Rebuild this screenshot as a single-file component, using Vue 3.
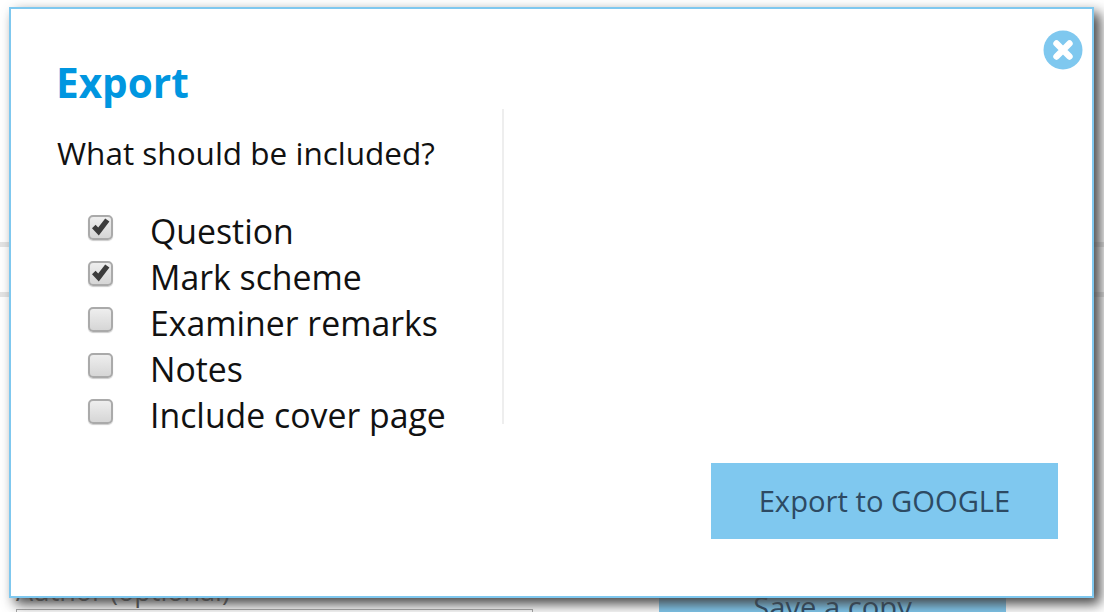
<template>
  <div class="page">
    <div class="backdrop">
      <div class="rule rule-one"></div>
      <div class="rule rule-two"></div>
      <div class="bottom-row">
        <div class="author">
          <div class="author-label">Author (optional)</div>
          <div class="author-input"></div>
        </div>
        <div class="save-btn">Save a copy</div>
      </div>
    </div>

    <div class="modal">
      <button class="close" type="button" aria-label="Close">
        <svg width="40" height="40" viewBox="0 0 40 40">
          <circle cx="20" cy="20" r="19.5" fill="#7fc8ef" />
          <path d="M13.5 13.5 L26.5 26.5 M26.5 13.5 L13.5 26.5" stroke="#fff" stroke-width="6.4" stroke-linecap="round" fill="none" />
        </svg>
      </button>

      <h1 class="title">Export</h1>

      <div class="columns">
        <div class="options">
          <p class="question">What should be included?</p>
          <ul class="list">
            <li v-for="item in items" :key="item.label" class="row">
              <span class="box" :class="{ checked: item.checked }">
                <svg v-if="item.checked" width="21" height="21" viewBox="0 0 21 21">
                  <path d="M2 11.2 L5.6 7.8 L8.2 10.4 L15.2 1.6 L19.4 4.4 L8.8 18.4 Z" fill="#3c3c3c" />
                </svg>
              </span>
              <span class="label">{{ item.label }}</span>
            </li>
          </ul>
        </div>
        <div class="preview"></div>
      </div>

      <div class="actions">
        <button class="export" type="button">Export to GOOGLE</button>
      </div>
    </div>
  </div>
</template>

<script setup>
const items = [
  { label: "Question", checked: true },
  { label: "Mark scheme", checked: true },
  { label: "Examiner remarks", checked: false },
  { label: "Notes", checked: false },
  { label: "Include cover page", checked: false },
];
</script>

<style>
html,
body {
  margin: 0;
  overflow: hidden;
  background: #fff;
}
</style>

<style scoped>
.page {
  position: relative;
  width: 1104px;
  height: 612px;
  overflow: hidden;
  background: #fff;
  font-family: "Open Sans", "Liberation Sans", sans-serif;
}
.backdrop {
  padding-top: 242px;
}
.rule {
  height: 5px;
  background: #e4e4e4;
}
.rule-two {
  margin-top: 45px;
}
.bottom-row {
  display: flex;
  margin-top: 279px;
  padding-left: 16px;
}
.author {
  width: 517px;
}
.author-label {
  font-size: 27px;
  line-height: 30px;
  color: #555;
}
.author-input {
  box-sizing: border-box;
  height: 40px;
  margin-top: 3px;
  border: 1px solid #aaa;
}
.save-btn {
  width: 347px;
  height: 76px;
  margin-left: 126px;
  padding-top: 11px;
  box-sizing: border-box;
  background: #7fc8ef;
  color: #2d4a63;
  font-size: 29.2px;
  text-align: center;
}
.modal {
  position: absolute;
  left: 9px;
  top: 7px;
  box-sizing: border-box;
  width: 1085px;
  height: 591px;
  padding: 46px 34px 0 46px;
  background: #fff;
  border: 2px solid #7fc8ef;
  box-shadow: 6px 6px 12px #444;
}
.close {
  position: absolute;
  top: 20.5px;
  right: 9px;
  width: 40px;
  height: 40px;
  padding: 0;
  border: 0;
  background: none;
}
.close svg {
  display: block;
}
.title {
  margin: 0;
  font-size: 40.5px;
  line-height: 50px;
  font-weight: 700;
  color: #0096e0;
  margin-left: -1px;
  padding-top: 3px;
  height: 47px;
}
.columns {
  display: flex;
  height: 315px;
  margin-top: 4px;
}
.options {
  box-sizing: border-box;
  width: 447px;
  height: 315px;
  border-right: 2px solid #eee;
}
.question {
  margin: 0;
  padding-top: 22px;
  font-size: 31.5px;
  line-height: 44px;
  color: #111;
}
.list {
  margin: 37px 0 0;
  padding: 0 0 0 31px;
  list-style: none;
}
.row {
  display: flex;
  align-items: flex-start;
  height: 46px;
}
.box {
  display: flex;
  align-items: center;
  justify-content: center;
  box-sizing: border-box;
  width: 25px;
  height: 25px;
  margin-top: 3px;
  border: 2px solid #aaa;
  border-radius: 5px;
  background: linear-gradient(#eee, #d6d6d6);
  box-shadow: 0 1px 1px #ccc;
}
.label {
  margin-left: 37px;
  font-size: 33.8px;
  line-height: 44px;
  color: #111;
  margin-top: -3px;
}
.actions {
  display: flex;
  justify-content: flex-end;
  margin-top: 39px;
}
.export {
  width: 347px;
  height: 76px;
  border: 0;
  background: #7fc8ef;
  color: #2d4a63;
  font-family: inherit;
  font-size: 29.2px;
}
</style>
